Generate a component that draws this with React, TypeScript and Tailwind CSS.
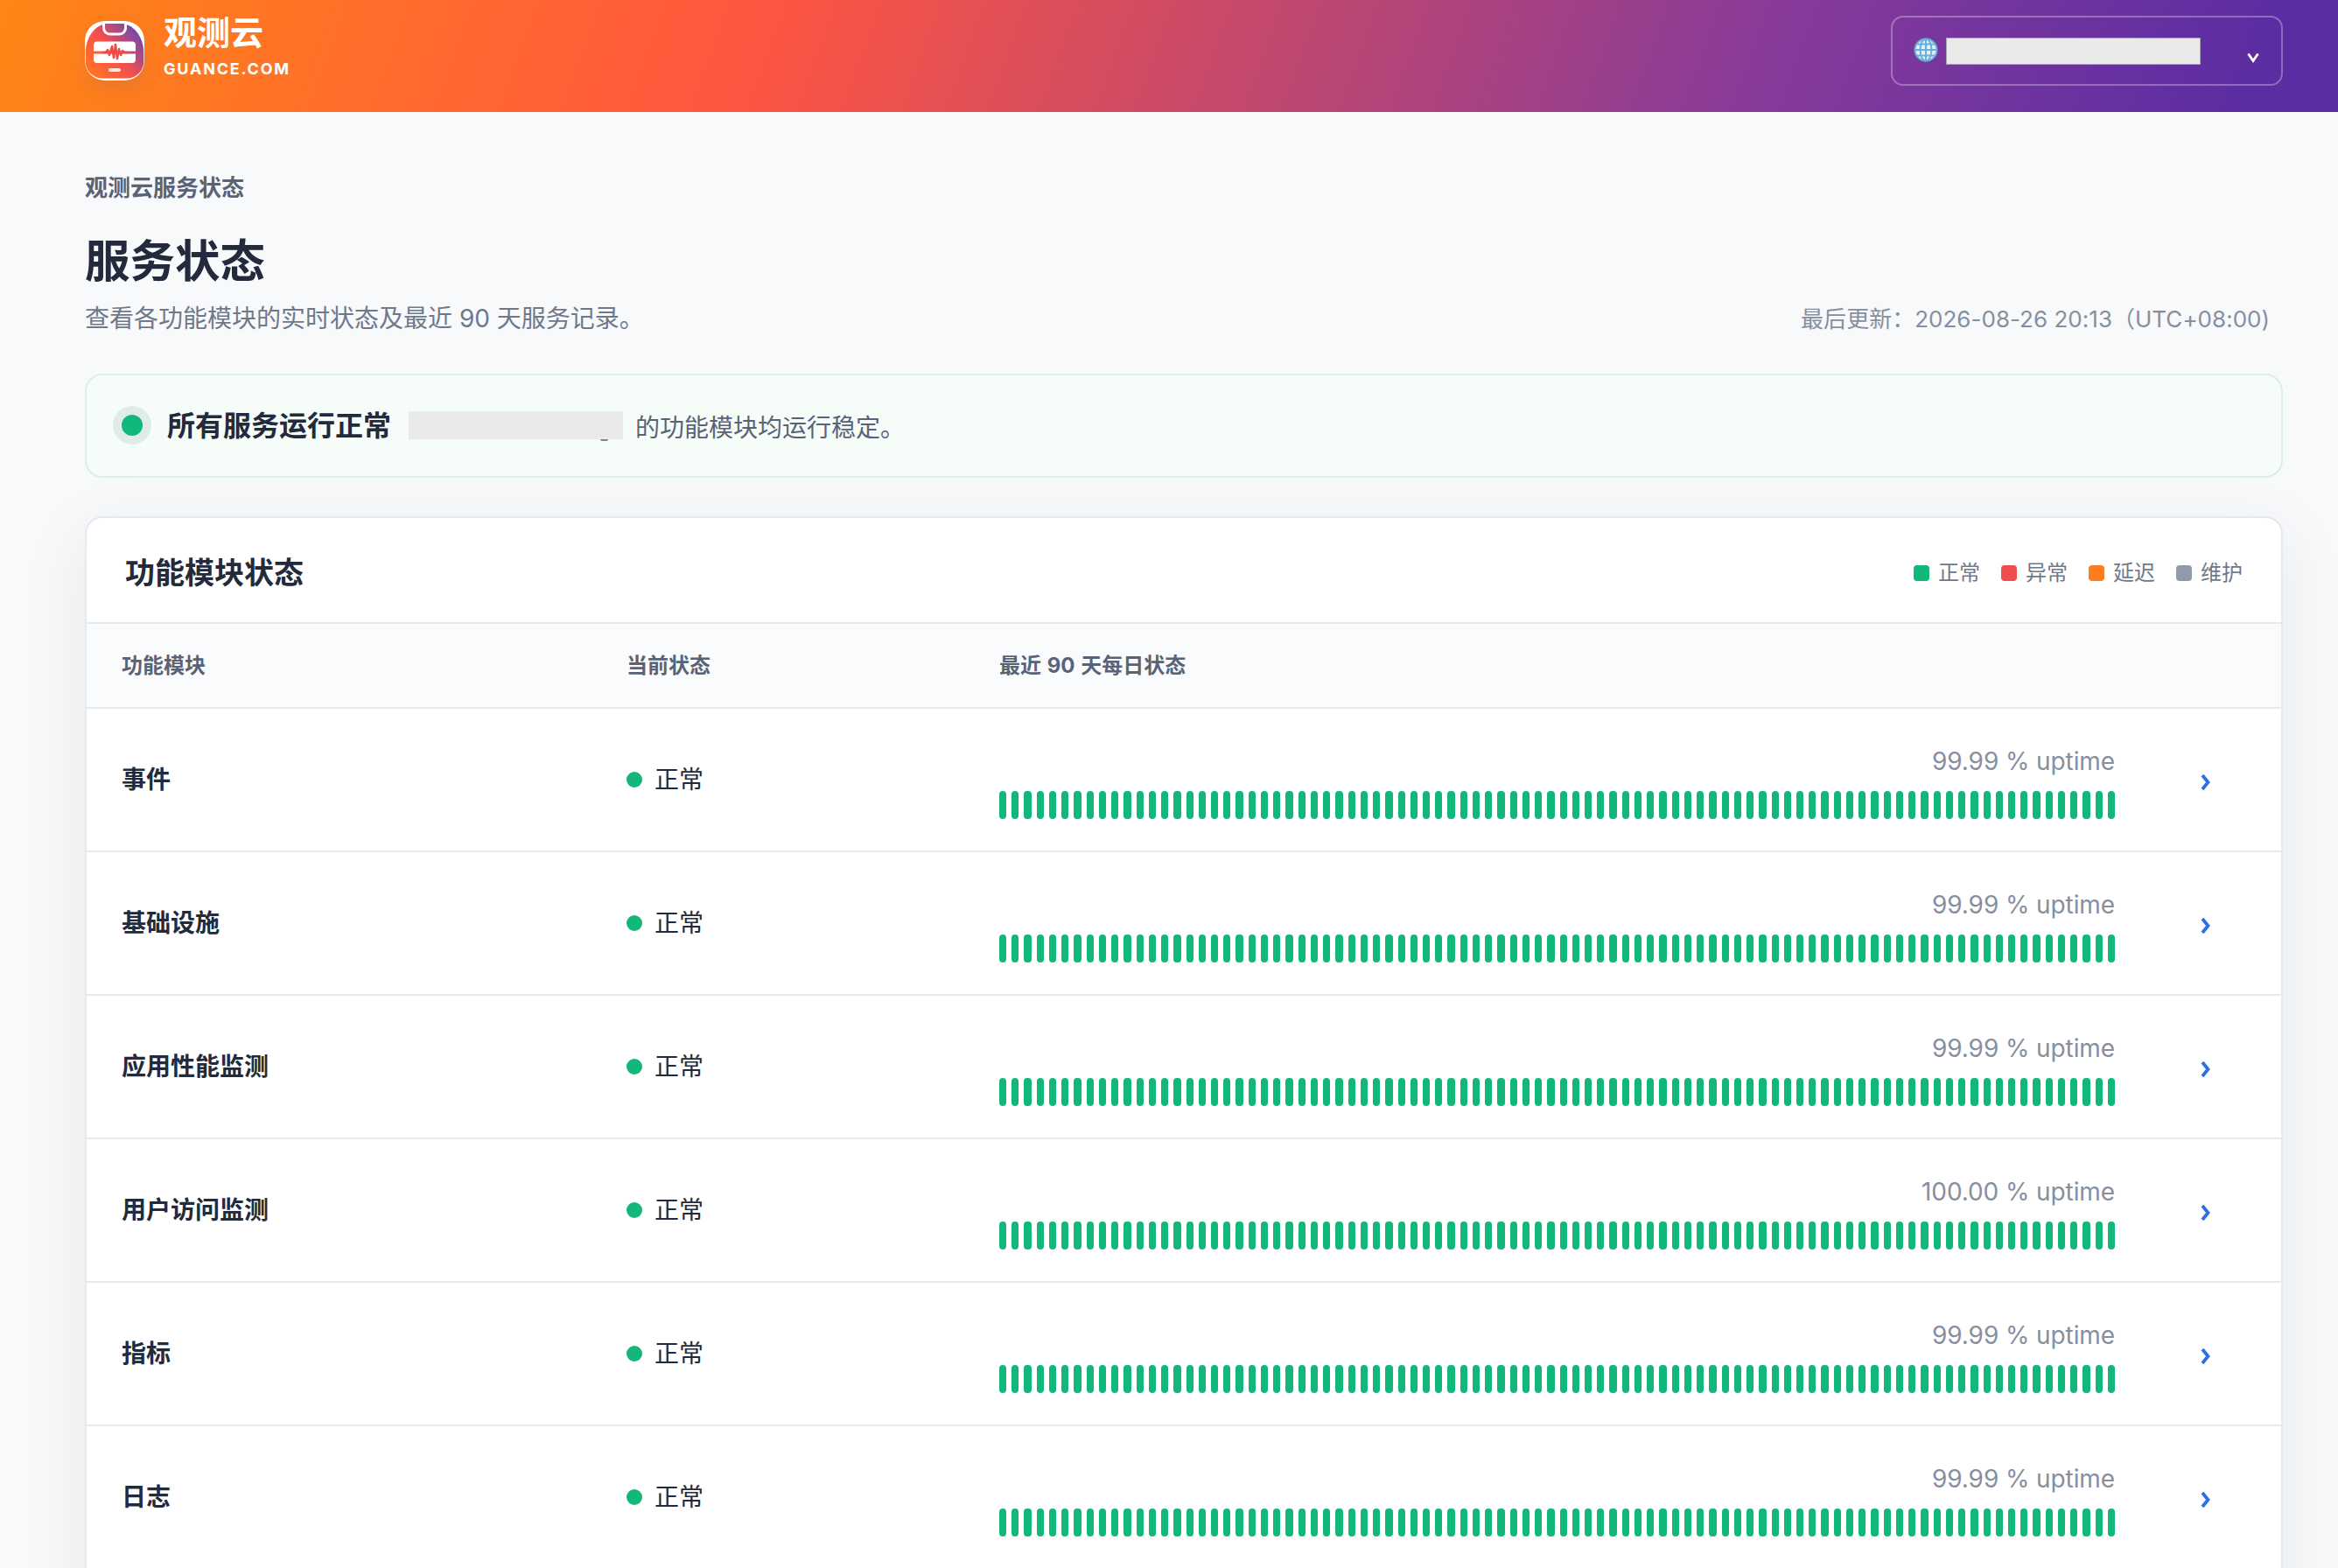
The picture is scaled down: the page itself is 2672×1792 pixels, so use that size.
import { useState } from "react";

const LEGEND = [
  { label: "正常", color: "bg-[#12b77a]" },
  { label: "异常", color: "bg-[#f04f50]" },
  { label: "延迟", color: "bg-[#fb7d1e]" },
  { label: "维护", color: "bg-[#9299ab]" },
];

const MODULES = [
  { id: 1, name: "事件", uptime: "99.99" },
  { id: 2, name: "基础设施", uptime: "99.99" },
  { id: 3, name: "应用性能监测", uptime: "99.99" },
  { id: 4, name: "用户访问监测", uptime: "100.00" },
  { id: 5, name: "指标", uptime: "99.99" },
  { id: 6, name: "日志", uptime: "99.99" },
];

const DAYS = Array.from({ length: 90 }, (_, i) => i);

function Logo() {
  return (
    <svg width="68" height="68" viewBox="0 0 68 68" fill="none" className="rounded-[22px] shadow-[0_8px_20px_rgba(90,90,120,0.14)]">
      <defs>
        <linearGradient id="logo" x1="8" y1="56" x2="62" y2="10" gradientUnits="userSpaceOnUse">
          <stop offset="0" stopColor="#ff6f2a" />
          <stop offset="0.45" stopColor="#f5504a" />
          <stop offset="1" stopColor="#6a46b4" />
        </linearGradient>
      </defs>
      <rect width="68" height="68" rx="22" fill="#fff" />
      <path d="M.8 34C2 17 12 5 24 3h20C56 5 66 17 67.200 34v14c-1 10-9 17.500-19 17.500H20C10 65.500 1.500 58 .8 48z" fill="url(#logo)" />
      <path d="M21.500 2v6a7 7 0 0 0 7 7h11a7 7 0 0 0 7-7V2" stroke="#fff" strokeWidth="3" />
      <path d="M14 23.500h40a4 4 0 0 1 4 4V34.500H10v-7a4 4 0 0 1 4-4zM10 37.500h48V44a4 4 0 0 1-4 4H14a4 4 0 0 1-4-4z" fill="#fff" />
      <path d="M20 36h4l2-3 2 6 3-10 2 13 2-15 2 16 2-11 2 7 2-5 2 2h4" stroke="#ee4b48" strokeWidth="2.500" strokeLinejoin="round" />
      <rect x="27" y="54" width="14" height="4" rx="2" fill="#fff" fillOpacity="0.85" />
    </svg>
  );
}

function GlobeIcon() {
  return (
    <svg width="28" height="28" viewBox="0 0 28 28" fill="none" className="-mt-[2px]">
      <circle cx="14" cy="14" r="13" fill="#e6eef2" />
      <g stroke="#65b1dc" strokeWidth="2">
        <circle cx="14" cy="14" r="12.500" />
        <ellipse cx="14" cy="14" rx="6.500" ry="12.500" />
        <path d="M14 1v26M1 14h26M3.500 7.500h21M3.500 20.500h21" />
      </g>
    </svg>
  );
}

export default function App() {
  const [openId, setOpenId] = useState<number | null>(null);

  return (
    <div className="h-[1792px] overflow-hidden bg-[#f7f9fb] font-['Inter','Noto_Sans_CJK_SC',sans-serif] text-[#222a3b]">
      {/* Top bar */}
      <header className="flex h-32 justify-between bg-[linear-gradient(110deg,#ff8615_0%,#ff5640_32%,#853a9b_76%,#5b2da2_96%)] pl-[97px] pr-[63px]">
        <div className="flex gap-[22px] text-white">
          <div className="pt-6">
            <Logo />
          </div>
          <div className="pt-[13px]">
            <p className="text-[38px] font-bold leading-[48px]">观测云</p>
            <p className="mt-[6px] text-[18px] font-bold leading-6 tracking-[1.8px]">
              GUANCE.COM
            </p>
          </div>
        </div>
        <button className="mt-[18px] flex h-20 w-[448px] items-center rounded-[14px] border-2 border-white/30 pl-6 pr-[25px]">
          <GlobeIcon />
          <span className="ml-[9px] h-[31px] w-[291px] border border-[#a8a4b4] bg-[#eaeaea]" />
          <svg width="14" height="12" viewBox="0 0 14 12" fill="none" className="ml-auto mt-4">
            <path d="M1.500 1.500 7 9.500l5.500-8" stroke="#fff" strokeWidth="2.800" />
          </svg>
        </button>
      </header>

      <main className="pl-[97px] pr-[63px]">
        {/* Page title */}
        <section className="flex h-[299px] items-end justify-between">
          <div className="h-full pt-[67px]">
            <p className="text-[26px] font-bold leading-10 text-[#596377]">
              观测云服务状态
            </p>
            <h1 className="mt-[28px] text-[51.500px] font-bold leading-[70px]">
              服务状态
            </h1>
            <p className="mt-[11px] text-[28px] leading-10 text-[#6f788b]">
              查看各功能模块的实时状态及最近 90 天服务记录。
            </p>
          </div>
          <p className="mb-[42px] pr-[15px] text-[26px] leading-10 tracking-[0.02px] text-[#868f9f]">
            最后更新：2026-08-26 20:13（UTC+08:00)
          </p>
        </section>

        {/* Overall status */}
        <section className="flex h-[119px] items-center rounded-[20px] border-2 border-[#dbefe6] bg-[#f6fcf8] pl-[30px]">
          <span className="-mt-[2px] flex size-11 items-center justify-center rounded-full bg-[#dfece7]">
            <span className="size-6 rounded-full bg-[#12b77a]" />
          </span>
          <h2 className="ml-[18px] text-[32px] font-bold leading-10">
            所有服务运行正常
          </h2>
          <span className="relative -mt-[2px] ml-5 h-8 w-[245px] bg-[#eaeaea]">
            <i className="absolute left-[219px] top-full h-[2px] w-[9px] rounded-b-full bg-[#7a8394]" />
          </span>
          <p className="ml-[14px] mt-[4px] text-[28px] leading-10 text-[#596377]">
            的功能模块均运行稳定。
          </p>
        </section>

        {/* Module table */}
        <section className="mt-11 rounded-[20px] border-2 border-[#e5eaf1] bg-white pb-20 shadow-[0_20px_80px_rgba(30,30,30,0.07)]">
          <div className="flex h-[121px] items-center justify-between border-b-2 border-[#e5eaf1] pl-[44px] pr-11 pt-[6px]">
            <h2 className="text-[34px] font-bold">功能模块状态</h2>
            <div className="flex gap-6">
              {LEGEND.map((item) => (
                <span key={item.label} className="flex items-center gap-[10px] text-[24px] text-[#6f788b]">
                  <i className={`size-[18px] rounded-[4px] ${item.color}`} />
                  {item.label}
                </span>
              ))}
            </div>
          </div>

          <div className="grid h-[97px] grid-cols-[577px_426px_1fr] items-center border-b-2 border-[#e5eaf1] bg-[#fafbfd] pl-10 text-[24px] font-bold text-[#596377]">
            <span>功能模块</span>
            <span>当前状态</span>
            <span className="[word-spacing:1px]">最近 90 天每日状态</span>
          </div>

          {MODULES.map((item) => (
            <div
              key={item.id}
              className="grid h-[164px] grid-cols-[577px_426px_1275px_1fr] items-center border-b-2 border-[#e5eaf1] pl-10"
            >
              <span className="text-[28px] font-bold">{item.name}</span>
              <span className="flex items-center gap-[14px] text-[28px]">
                <i className="size-[18px] rounded-full bg-[#12b77a]" />
                正常
              </span>
              <div className="pt-[4px]">
                <p className="text-right text-[28px] leading-10 tracking-[-0.1px] text-[#868f9f]">
                  {item.uptime} % uptime
                </p>
                <div className="mt-[14px] flex h-8 gap-[6px]">
                  {DAYS.map((day) => (
                    <i key={day} className="flex-1 rounded-[4px] bg-[#12b77a]" />
                  ))}
                </div>
              </div>
              <button
                onClick={() => setOpenId(openId === item.id ? null : item.id)}
                className="flex items-center pl-[98px] pt-[5px]"
              >
                <svg width="12" height="18" viewBox="0 0 12 18" fill="none">
                  <path d="M2 1 8.500 9 2 17" stroke="#2f6fe4" strokeWidth="3.800" />
                </svg>
              </button>
            </div>
          ))}
        </section>
      </main>
    </div>
  );
}
